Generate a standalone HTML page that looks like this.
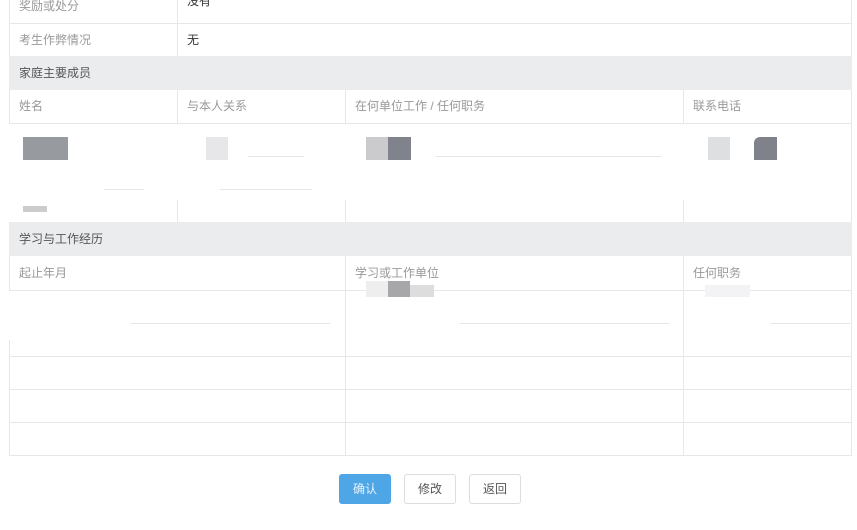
<!DOCTYPE html><html><head><meta charset="utf-8"><style>
body{margin:0;width:857px;height:530px;background:#fff;position:relative;overflow:hidden;font-family:"Liberation Sans","Noto Sans CJK SC",sans-serif;font-size:12px;color:#999}
.a{position:absolute}
.h{background:#ebecee;color:#555}
.l{position:absolute;background:#e6e7ea}
.t{position:absolute;line-height:14px}
.b{position:absolute;top:474px;height:30px;width:52px;border:1px solid #ddd;border-radius:3px;box-sizing:border-box;text-align:center;line-height:28px;color:#555;background:#fff}
</style></head><body>
<div class="a h" style="left:9px;top:56px;width:843px;height:34px"></div>
<div class="a h" style="left:9px;top:222px;width:843px;height:34px"></div>
<!-- horizontal lines -->
<div class="l" style="left:9px;top:23px;width:843px;height:1px"></div>
<div class="l" style="left:9px;top:123px;width:843px;height:1px"></div>
<div class="l" style="left:9px;top:290px;width:843px;height:1px"></div>
<div class="l" style="left:9px;top:356px;width:843px;height:1px"></div>
<div class="l" style="left:9px;top:389px;width:843px;height:1px"></div>
<div class="l" style="left:9px;top:422px;width:843px;height:1px"></div>
<div class="l" style="left:9px;top:455px;width:843px;height:1px"></div>
<div class="l" style="left:248px;top:156px;width:56px;height:1px"></div>
<div class="l" style="left:436px;top:156px;width:226px;height:1px"></div>
<div class="l" style="left:104px;top:189px;width:40px;height:1px"></div>
<div class="l" style="left:220px;top:189px;width:92px;height:1px"></div>
<div class="l" style="left:130px;top:323px;width:200px;height:1px"></div>
<div class="l" style="left:460px;top:323px;width:210px;height:1px"></div>
<div class="l" style="left:770px;top:323px;width:80px;height:1px"></div>
<!-- vertical lines -->
<div class="l" style="left:9px;top:0;width:1px;height:56px"></div>
<div class="l" style="left:851px;top:0;width:1px;height:56px"></div>
<div class="l" style="left:177px;top:0;width:1px;height:56px"></div>
<div class="l" style="left:9px;top:90px;width:1px;height:33px"></div>
<div class="l" style="left:851px;top:90px;width:1px;height:132px"></div>
<div class="l" style="left:177px;top:90px;width:1px;height:33px"></div>
<div class="l" style="left:345px;top:90px;width:1px;height:33px"></div>
<div class="l" style="left:683px;top:90px;width:1px;height:33px"></div>
<div class="l" style="left:177px;top:200px;width:1px;height:22px"></div>
<div class="l" style="left:345px;top:200px;width:1px;height:22px"></div>
<div class="l" style="left:683px;top:200px;width:1px;height:22px"></div>
<div class="l" style="left:9px;top:340px;width:1px;height:116px"></div>
<div class="l" style="left:851px;top:256px;width:1px;height:200px"></div>
<div class="l" style="left:345px;top:256px;width:1px;height:200px"></div>
<div class="l" style="left:683px;top:256px;width:1px;height:200px"></div>
<div class="l" style="left:9px;top:256px;width:1px;height:34px"></div>
<!-- text -->
<div class="t" style="left:19px;top:-1px">奖励或处分</div>
<div class="t" style="left:187px;top:-6px;color:#333">没有</div>
<div class="t" style="left:19px;top:33px">考生作弊情况</div>
<div class="t" style="left:187px;top:33px;color:#333">无</div>
<div class="t" style="left:19px;top:66px;color:#555">家庭主要成员</div>
<div class="t" style="left:19px;top:99px">姓名</div>
<div class="t" style="left:187px;top:99px">与本人关系</div>
<div class="t" style="left:355px;top:99px">在何单位工作 / 任何职务</div>
<div class="t" style="left:693px;top:99px">联系电话</div>
<div class="t" style="left:19px;top:232px;color:#555">学习与工作经历</div>
<div class="t" style="left:19px;top:266px">起止年月</div>
<div class="t" style="left:355px;top:266px">学习或工作单位</div>
<div class="t" style="left:693px;top:266px">任何职务</div>
<!-- masked blocks -->
<div class="a" style="left:23px;top:137px;width:45px;height:23px;background:#979a9e"></div>
<div class="a" style="left:206px;top:137px;width:22px;height:23px;background:#e7e7e9"></div>
<div class="a" style="left:366px;top:137px;width:22px;height:23px;background:#cbcbcd"></div>
<div class="a" style="left:388px;top:137px;width:23px;height:23px;background:#80838b"></div>
<div class="a" style="left:708px;top:137px;width:22px;height:23px;background:#dedfe0"></div>
<div class="a" style="left:754px;top:137px;width:23px;height:23px;background:#7f828b;border-top-left-radius:6px"></div>
<div class="a" style="left:23px;top:206px;width:24px;height:6px;background:#ccc"></div>
<div class="a" style="left:366px;top:281px;width:22px;height:16px;background:#eee"></div>
<div class="a" style="left:388px;top:281px;width:22px;height:16px;background:#a7a7a9"></div>
<div class="a" style="left:410px;top:285px;width:24px;height:12px;background:#ddd"></div>
<div class="a" style="left:705px;top:285px;width:45px;height:12px;background:#f3f3f5"></div>
<!-- buttons -->
<div class="b" style="left:339px;background:#4fa6e6;border-color:#4fa6e6;color:#e8f3fb">确认</div>
<div class="b" style="left:404px">修改</div>
<div class="b" style="left:469px">返回</div>
</body></html>
